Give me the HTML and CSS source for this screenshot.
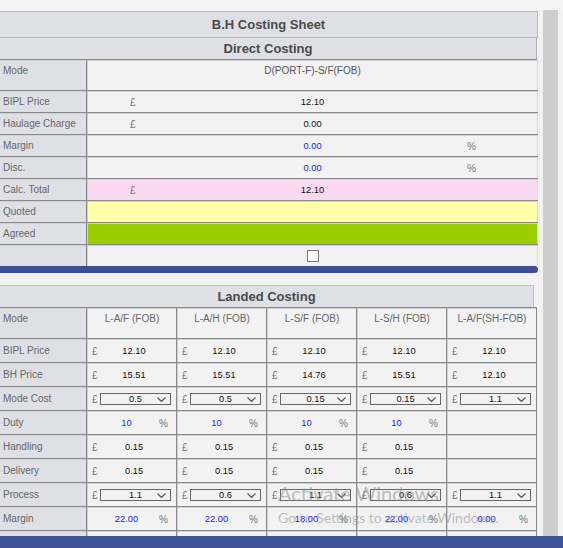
FILE: index.html
```html
<!DOCTYPE html>
<html>
<head>
<meta charset="utf-8">
<link rel="stylesheet" href="styles.css">
</head>
<body>
<div class="viewport">
  <main class="sheet">
    <div class="title">B.H Costing Sheet</div>
    <div class="subtitle">Direct Costing</div>
    <div class="direct">
      <div class="lab tall">Mode</div>
      <div class="val tall"><span class="num mode">D(PORT-F)-S/F(FOB)</span></div>

      <div class="lab">BIPL Price</div>
      <div class="val"><span class="cur">£</span><span class="num">12.10</span></div>

      <div class="lab">Haulage Charge</div>
      <div class="val"><span class="cur">£</span><span class="num">0.00</span></div>

      <div class="lab">Margin</div>
      <div class="val"><span class="num blue">0.00</span><span class="pct">%</span></div>

      <div class="lab">Disc.</div>
      <div class="val"><span class="num blue">0.00</span><span class="pct">%</span></div>

      <div class="lab">Calc. Total</div>
      <div class="val pink"><span class="cur">£</span><span class="num">12.10</span></div>

      <div class="lab">Quoted</div>
      <div class="val yellow"></div>

      <div class="lab">Agreed</div>
      <div class="val green"></div>

      <div class="lab"></div>
      <div class="val"><span class="cb"></span></div>
    </div>
    <div class="bluebar"></div>

    <div class="landed-title">Landed Costing</div>
    <div class="landed">
      <div class="lab tall">Mode</div>
      <div class="lc tall head">L-A/F (FOB)</div>
      <div class="lc tall head">L-A/H (FOB)</div>
      <div class="lc tall head">L-S/F (FOB)</div>
      <div class="lc tall head">L-S/H (FOB)</div>
      <div class="lc tall head">L-A/F(SH-FOB)</div>

      <div class="lab">BIPL Price</div>
      <div class="lc money"><span class="cur">£</span><span class="num">12.10</span></div>
      <div class="lc money"><span class="cur">£</span><span class="num">12.10</span></div>
      <div class="lc money"><span class="cur">£</span><span class="num">12.10</span></div>
      <div class="lc money"><span class="cur">£</span><span class="num">12.10</span></div>
      <div class="lc money"><span class="cur">£</span><span class="num">12.10</span></div>

      <div class="lab">BH Price</div>
      <div class="lc money"><span class="cur">£</span><span class="num">15.51</span></div>
      <div class="lc money"><span class="cur">£</span><span class="num">15.51</span></div>
      <div class="lc money"><span class="cur">£</span><span class="num">14.76</span></div>
      <div class="lc money"><span class="cur">£</span><span class="num">15.51</span></div>
      <div class="lc money"><span class="cur">£</span><span class="num">12.10</span></div>

      <div class="lab">Mode Cost</div>
      <div class="lc selrow"><span class="cur">£</span><span class="sel"><span class="seltext">0.5</span><svg class="chev" width="9" height="5" viewBox="0 0 9 5"><path d="M0.5 0.5 L4.5 4.5 L8.5 0.5" fill="none" stroke="#555" stroke-width="1.2"/></svg></span></div>
      <div class="lc selrow"><span class="cur">£</span><span class="sel"><span class="seltext">0.5</span><svg class="chev" width="9" height="5" viewBox="0 0 9 5"><path d="M0.5 0.5 L4.5 4.5 L8.5 0.5" fill="none" stroke="#555" stroke-width="1.2"/></svg></span></div>
      <div class="lc selrow"><span class="cur">£</span><span class="sel"><span class="seltext">0.15</span><svg class="chev" width="9" height="5" viewBox="0 0 9 5"><path d="M0.5 0.5 L4.5 4.5 L8.5 0.5" fill="none" stroke="#555" stroke-width="1.2"/></svg></span></div>
      <div class="lc selrow"><span class="cur">£</span><span class="sel"><span class="seltext">0.15</span><svg class="chev" width="9" height="5" viewBox="0 0 9 5"><path d="M0.5 0.5 L4.5 4.5 L8.5 0.5" fill="none" stroke="#555" stroke-width="1.2"/></svg></span></div>
      <div class="lc selrow"><span class="cur">£</span><span class="sel"><span class="seltext">1.1</span><svg class="chev" width="9" height="5" viewBox="0 0 9 5"><path d="M0.5 0.5 L4.5 4.5 L8.5 0.5" fill="none" stroke="#555" stroke-width="1.2"/></svg></span></div>

      <div class="lab">Duty</div>
      <div class="lc percent"><span class="num blue">10</span><span class="pct">%</span></div>
      <div class="lc percent"><span class="num blue">10</span><span class="pct">%</span></div>
      <div class="lc percent"><span class="num blue">10</span><span class="pct">%</span></div>
      <div class="lc percent"><span class="num blue">10</span><span class="pct">%</span></div>
      <div class="lc"></div>

      <div class="lab">Handling</div>
      <div class="lc money"><span class="cur">£</span><span class="num">0.15</span></div>
      <div class="lc money"><span class="cur">£</span><span class="num">0.15</span></div>
      <div class="lc money"><span class="cur">£</span><span class="num">0.15</span></div>
      <div class="lc money"><span class="cur">£</span><span class="num">0.15</span></div>
      <div class="lc"></div>

      <div class="lab">Delivery</div>
      <div class="lc money"><span class="cur">£</span><span class="num">0.15</span></div>
      <div class="lc money"><span class="cur">£</span><span class="num">0.15</span></div>
      <div class="lc money"><span class="cur">£</span><span class="num">0.15</span></div>
      <div class="lc money"><span class="cur">£</span><span class="num">0.15</span></div>
      <div class="lc"></div>

      <div class="lab">Process</div>
      <div class="lc selrow"><span class="cur">£</span><span class="sel"><span class="seltext">1.1</span><svg class="chev" width="9" height="5" viewBox="0 0 9 5"><path d="M0.5 0.5 L4.5 4.5 L8.5 0.5" fill="none" stroke="#555" stroke-width="1.2"/></svg></span></div>
      <div class="lc selrow"><span class="cur">£</span><span class="sel"><span class="seltext">0.6</span><svg class="chev" width="9" height="5" viewBox="0 0 9 5"><path d="M0.5 0.5 L4.5 4.5 L8.5 0.5" fill="none" stroke="#555" stroke-width="1.2"/></svg></span></div>
      <div class="lc selrow"><span class="cur">£</span><span class="sel"><span class="seltext">1.1</span><svg class="chev" width="9" height="5" viewBox="0 0 9 5"><path d="M0.5 0.5 L4.5 4.5 L8.5 0.5" fill="none" stroke="#555" stroke-width="1.2"/></svg></span></div>
      <div class="lc selrow"><span class="cur">£</span><span class="sel"><span class="seltext">0.6</span><svg class="chev" width="9" height="5" viewBox="0 0 9 5"><path d="M0.5 0.5 L4.5 4.5 L8.5 0.5" fill="none" stroke="#555" stroke-width="1.2"/></svg></span></div>
      <div class="lc selrow"><span class="cur">£</span><span class="sel"><span class="seltext">1.1</span><svg class="chev" width="9" height="5" viewBox="0 0 9 5"><path d="M0.5 0.5 L4.5 4.5 L8.5 0.5" fill="none" stroke="#555" stroke-width="1.2"/></svg></span></div>

      <div class="lab">Margin</div>
      <div class="lc percent"><span class="num blue">22.00</span><span class="pct">%</span></div>
      <div class="lc percent"><span class="num blue">22.00</span><span class="pct">%</span></div>
      <div class="lc percent"><span class="num blue">18.00</span><span class="pct">%</span></div>
      <div class="lc percent"><span class="num blue">22.00</span><span class="pct">%</span></div>
      <div class="lc percent"><span class="num blue">0.00</span><span class="pct">%</span></div>

      <div class="lab"></div>
      <div class="lc"></div>
      <div class="lc"></div>
      <div class="lc"></div>
      <div class="lc"></div>
      <div class="lc"></div>
    </div>
  </main>
  <div class="scroll"></div>
</div>
<div class="footer"></div>
<div class="wm">
  <div class="wm1">Activate Windows</div>
  <div class="wm2">Go to Settings to activate Windows.</div>
</div>
</body>
</html>
```
FILE: styles.css
```css
* { box-sizing: border-box; }
html, body { margin: 0; padding: 0; }
body {
  height: 548px;
  overflow: hidden;
  display: flex;
  flex-direction: column;
  background: #f2f2f2;
  font-family: "Liberation Sans", Arial, sans-serif;
  position: relative;
}
.viewport {
  flex: 1;
  min-height: 0;
  display: flex;
  overflow: hidden;
  background: linear-gradient(#f4f4f4 0 10px, #f2f2f2 10px);
}
.sheet { width: 538px; flex: none; margin-top: 11px; }
.scroll { width: 15px; flex: none; margin-left: 5px; margin-top: 10px; background: #cdcdcd; }
.footer { height: 12px; flex: none; background: #3f5298; }

.title {
  height: 27px;
  border: 1px solid #b8b8be;
  border-left: 0;
  background: #dfe0e5;
  color: #4a4a4a;
  font-size: 13px;
  font-weight: bold;
  display: flex;
  align-items: center;
  justify-content: center;
}
.subtitle {
  width: 537px;
  height: 22px;
  border-right: 1px solid #aeaeb4;
  border-bottom: 1px solid #8a8a8a;
  background: #dfe0e5;
  color: #4a4a4a;
  font-size: 13px;
  font-weight: bold;
  display: flex;
  align-items: center;
  justify-content: center;
}

/* direct costing grid */
.direct {
  display: grid;
  grid-template-columns: 86px 1fr;
  gap: 1px;
  background: #8a8a8a;
}
.direct > div {
  height: 21px;
  border-top: 1px solid #d0d0d0;
  background: #f2f2f2;
}
.direct > .tall { height: 30px; }
.lab {
  background: #dfe0e6 !important;
  color: #666;
  font-size: 10px;
  line-height: 20px;
  padding-left: 3px;
  white-space: nowrap;
}
.val {
  border-left: 1px solid #d0d0d0;
  border-right: 1px solid #d8d8d8;
  display: grid;
  align-items: center;
  font-size: 9.33px;
  color: #111;
}
.val.tall { align-items: start; line-height: 20px; }
.val > * { grid-area: 1 / 1; }
.val .cur { justify-self: start; margin-left: 42px; }
.val .num { justify-self: center; }
.val .pct { justify-self: start; margin-left: 379px; }
.val .mode { font-size: 10px; color: #555; }
.cur, .pct { color: #777; font-size: 10px; }
.blue { color: #2323ff; }
.pink { background: #f9daf0 !important; }
.yellow { background: #ffffaa !important; }
.green { background: #99cf00 !important; }
.cb {
  width: 12px;
  height: 12px;
  border: 1px solid #777;
  background: #fff;
  justify-self: center;
}

.bluebar {
  height: 7px;
  background: #3c4e96;
  border-radius: 0 4px 4px 0;
  margin-bottom: 12px;
}

.landed-title {
  width: 534px;
  height: 22px;
  border-top: 1px solid #bdbdc2;
  border-right: 1px solid #bdbdc2;
  background: #dfe0e5;
  color: #4a4a4a;
  font-size: 13px;
  font-weight: bold;
  display: flex;
  align-items: center;
  justify-content: center;
}

/* landed costing grid */
.landed {
  width: 537px;
  display: grid;
  grid-template-columns: 86px repeat(5, 89px);
  gap: 1px;
  padding: 1px 1px 0 0;
  background: #8a8a8a;
}
.landed > div {
  height: 23px;
  border-top: 1px solid #d0d0d0;
  background: #f2f2f2;
}
.landed > .tall { height: 30px; }
.landed > .lab { line-height: 22px; }
.landed > .lab.tall { line-height: 20px; }
.lc {
  border-left: 1px solid #d0d0d0;
  font-size: 9.33px;
  color: #111;
}
.lc.head {
  color: #666;
  font-size: 10px;
  text-align: center;
  line-height: 20px;
}
.money {
  display: grid;
  grid-template-columns: 12px 68px;
  align-items: center;
}
.money .cur { padding-left: 4px; }
.money .num { text-align: center; }
.percent {
  display: grid;
  grid-template-columns: 13px 51px 1fr;
  align-items: center;
}
.percent .num { grid-column: 2; text-align: center; }
.percent .pct { grid-column: 3; padding-left: 7px; }
.selrow {
  display: grid;
  grid-template-columns: 12px 71px;
  align-items: center;
}
.selrow .cur { padding-left: 4px; }
.sel {
  height: 12px;
  border: 1px solid #666;
  display: grid;
  align-items: center;
}
.sel > * { grid-area: 1 / 1; }
.seltext { justify-self: center; line-height: 10px; font-size: 9.33px; }
.chev { justify-self: end; margin-right: 4px; }

.wm {
  position: absolute;
  left: 278px;
  top: 481px;
  color: rgba(140, 140, 140, 0.55);
  font-family: Lato, "Open Sans", sans-serif;
  pointer-events: none;
  white-space: nowrap;
}
.wm1 { font-size: 20px; line-height: 24px; }
.wm2 { font-size: 14px; line-height: 18px; margin-top: 4px; }
```
